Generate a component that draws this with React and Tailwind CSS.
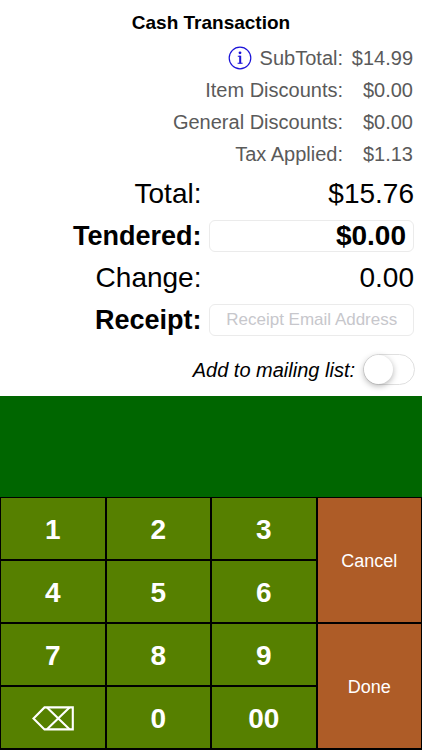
import React, { useState } from "react";

const adjustments = [
  ["Item Discounts:", "$0.00"],
  ["General Discounts:", "$0.00"],
  ["Tax Applied:", "$1.13"],
];

const keys = ["1", "2", "3", "4", "5", "6", "7", "8", "9", "back", "0", "00"];

function InfoIcon() {
  return (
    <svg viewBox="0 0 24 24" className="size-6" fill="none" stroke="#1a12d8" aria-hidden="true">
      <circle cx="12" cy="12" r="10.8" strokeWidth="1.2" />
      <circle cx="12" cy="6.8" r="1.4" fill="#1a12d8" stroke="none" />
      <path d="M9.8 10.2h2.4M9.6 17.2h5" strokeWidth="1.1" />
      <path d="M12.2 9.7v7.6" strokeWidth="2" />
    </svg>
  );
}

function BackspaceIcon() {
  return (
    <svg viewBox="0 0 42 25" className="h-[25px] w-[42px]" fill="none" stroke="currentColor" strokeWidth="2.1" aria-hidden="true">
      <path d="M12.5 1.4H40.8V23.4H12.5L1.5 12.4Z" />
      <path d="M15 1.5L37.5 23.3M37.5 1.5L15 23.3" />
    </svg>
  );
}

export default function App() {
  const [mailing, setMailing] = useState(false);
  return (
    <div className="flex min-h-screen flex-col bg-white font-['Liberation_Sans',Arial,sans-serif] text-black">
      <h1 className="pt-3 pb-[9px] text-center text-[19px] leading-[21px] font-bold">Cash Transaction</h1>

      <dl className="pr-[9px] pb-[3px] text-xl text-[#5a5a5a]">
        <div className="flex h-8 items-center justify-end">
          <button type="button" aria-label="Subtotal details" className="mr-2">
            <InfoIcon />
          </button>
          <dt>SubTotal:</dt>
          <dd className="w-[70px] text-right">$14.99</dd>
        </div>
        {adjustments.map(([label, value]) => (
          <div key={label} className="flex h-8 items-center justify-end">
            <dt>{label}</dt>
            <dd className="w-[70px] text-right">{value}</dd>
          </div>
        ))}
      </dl>

      <div className="grid auto-rows-[42px] grid-cols-[201fr_204fr] items-center gap-x-2 pr-2 text-[28px]">
        <span className="text-right">Total:</span>
        <output className="text-right">$15.76</output>
        <label htmlFor="tendered" className="text-right text-[27px] font-bold">Tendered:</label>
        <input
          id="tendered"
          defaultValue="$0.00"
          className="h-8 w-full min-w-0 rounded-md border border-[#ebebeb] px-[7px] text-right font-bold outline-none"
        />
        <span className="text-right">Change:</span>
        <output className="text-right">0.00</output>
        <label htmlFor="receipt" className="text-right text-[27px] font-bold">Receipt:</label>
        <input
          id="receipt"
          type="email"
          placeholder="Receipt Email Address"
          className="h-8 w-full min-w-0 rounded-md border border-[#ebebeb] px-[7px] text-center text-[17px] outline-none placeholder:text-[#c7c7cc]"
        />
      </div>

      <div className="flex items-center justify-end gap-2 pt-[13px] pr-[7px] pb-[11px]">
        <label htmlFor="mailing" className="text-xl italic">Add to mailing list:</label>
        <input
          id="mailing"
          type="checkbox"
          role="switch"
          checked={mailing}
          onChange={() => setMailing(!mailing)}
          className="h-[31px] w-[52px] appearance-none rounded-full border border-[#e0e0e0] bg-white before:block before:size-[29px] before:rounded-full before:bg-white before:shadow-[0_2px_6px_rgba(0,0,0,0.3)] checked:bg-[#4cd964] checked:before:ml-[21px]"
        />
      </div>

      <div className="flex-1 bg-[#006600]" />

      <div className="grid grid-cols-[3fr_1fr] border-b border-black text-white">
        <div className="grid auto-rows-[63px] grid-cols-3">
          {keys.map((key) => (
            <button
              key={key}
              type="button"
              aria-label={key === "back" ? "Backspace" : undefined}
              className="flex items-center justify-center border border-black bg-[#568000] pt-0.5 text-[28px] font-bold"
            >
              {key === "back" ? <BackspaceIcon /> : key}
            </button>
          ))}
        </div>
        <div className="grid grid-rows-2 text-lg">
          <button type="button" className="border border-black bg-[#ae5c27] pt-0.5">Cancel</button>
          <button type="button" className="border border-black bg-[#ae5c27] pt-0.5">Done</button>
        </div>
      </div>
    </div>
  );
}
